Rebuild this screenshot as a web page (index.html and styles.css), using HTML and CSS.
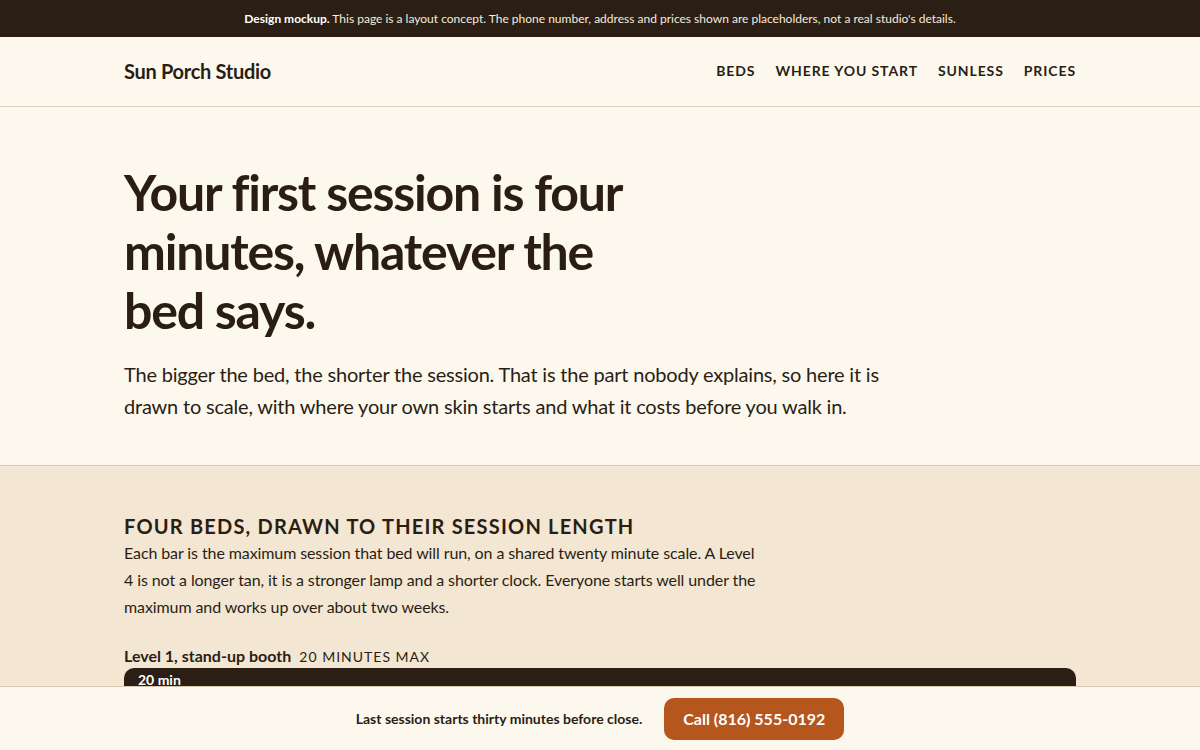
FILE: index.html
```html
<!DOCTYPE html>
<html lang="en">
<head>
    <meta charset="UTF-8">
    <meta name="viewport" content="width=device-width, initial-scale=1.0">
    <title>Sun Porch Studio</title>
    <link rel="stylesheet" href="styles.css">
</head>
<body>
    <div class="notice">
        <strong>Design mockup.</strong> This page is a layout concept. The phone number, address and prices shown are placeholders, not a real studio's details.
    </div>

    <header class="site-header">
        <div class="wrap header-row">
            <a class="brand" href="#">Sun Porch Studio</a>
            <nav class="nav">
                <a href="#beds">Beds</a>
                <a href="#start">Where you start</a>
                <a href="#sunless">Sunless</a>
                <a href="#prices">Prices</a>
            </nav>
        </div>
    </header>

    <section class="hero">
        <div class="wrap">
            <h1>Your first session is four minutes, whatever the bed says.</h1>
            <p class="lead">The bigger the bed, the shorter the session. That is the part nobody explains, so here it is drawn to scale, with where your own skin starts and what it costs before you walk in.</p>
        </div>
    </section>

    <section class="beds" id="beds">
        <div class="wrap">
            <h2>Four beds, drawn to their session length</h2>
            <p class="intro">Each bar is the maximum session that bed will run, on a shared twenty minute scale. A Level 4 is not a longer tan, it is a stronger lamp and a shorter clock. Everyone starts well under the maximum and works up over about two weeks.</p>

            <div class="bed">
                <div class="bed-label"><b>Level 1, stand-up booth</b> <span>20 minutes max</span></div>
                <div class="track"><div class="bar" style="width: 100%">20 min</div></div>
            </div>
            <div class="bed">
                <div class="bed-label"><b>Level 2, lay-down bed</b> <span>15 minutes max</span></div>
                <div class="track"><div class="bar" style="width: 75%">15 min</div></div>
            </div>
        </div>
    </section>

    <div class="callbar">
        <span>Last session starts thirty minutes before close.</span>
        <a class="call" href="#">Call (816) 555-0192</a>
    </div>
</body>
</html>
```

FILE: styles.css
```css
body {
    margin: 0;
    font-family: 'Lato', 'Noto Sans', sans-serif;
    color: #2a1e14;
    background-color: #fdf8ee;
}
a {
    color: inherit;
    text-decoration: none;
}
.wrap {
    max-width: 952px;
    margin: 0 auto;
}

.notice {
    background-color: #2b1f15;
    color: #f6ecdc;
    font-size: 12px;
    text-align: center;
    height: 37px;
    line-height: 37px;
}
.notice strong {
    color: #fff;
}

.site-header {
    border-bottom: 1px solid #ddd0bb;
}
.header-row {
    display: flex;
    justify-content: space-between;
    align-items: center;
    height: 69px;
}
.brand {
    font-size: 20px;
    font-weight: 700;
    letter-spacing: -0.3px;
    margin-top: -2px;
}
.nav {
    display: flex;
    gap: 20px;
    margin-top: -2px;
}
.nav a {
    font-size: 14px;
    font-weight: 700;
    text-transform: uppercase;
    letter-spacing: 0.9px;
}

.hero {
    padding: 56px 0 43px;
    border-bottom: 1px solid #d6c7ae;
}
.hero h1 {
    max-width: 540px;
    margin: 0 0 18px;
    font-size: 50px;
    line-height: 59px;
    font-weight: 700;
    letter-spacing: -1.2px;
}
.lead {
    max-width: 790px;
    margin: 0;
    font-size: 20px;
    line-height: 32px;
    letter-spacing: -0.2px;
}

.beds {
    background-color: #f3e6d3;
    padding: 47px 0 120px;
}
.beds h2 {
    margin: 0;
    font-size: 20px;
    line-height: 26px;
    font-weight: 700;
    text-transform: uppercase;
    letter-spacing: 1.2px;
}
.intro {
    max-width: 640px;
    margin: 0 0 26px;
    font-size: 16px;
    line-height: 27px;
    letter-spacing: -0.1px;
}
.bed {
    margin-bottom: 26px;
}
.bed-label {
    font-size: 16px;
    line-height: 20px;
    margin-bottom: 1px;
}
.bed-label b {
    font-weight: 700;
}
.bed-label span {
    font-size: 14px;
    text-transform: uppercase;
    letter-spacing: 1px;
    margin-left: 4px;
}
.track {
    height: 40px;
}
.bar {
    height: 100%;
    box-sizing: border-box;
    background-color: #2b1f15;
    color: #fff;
    border-radius: 10px;
    padding: 3px 14px;
    font-size: 14px;
    font-weight: 700;
}

.callbar {
    position: fixed;
    left: 0;
    right: 0;
    bottom: 0;
    height: 63px;
    background-color: #fdf8ee;
    border-top: 1px solid #d6c7ae;
    display: flex;
    justify-content: center;
    align-items: center;
    gap: 22px;
    font-size: 14px;
    font-weight: 700;
}
.call {
    background-color: #b5561d;
    color: #fff;
    font-size: 16px;
    font-weight: 700;
    padding: 0 19px;
    height: 42px;
    line-height: 42px;
    border-radius: 10px;
}
```
